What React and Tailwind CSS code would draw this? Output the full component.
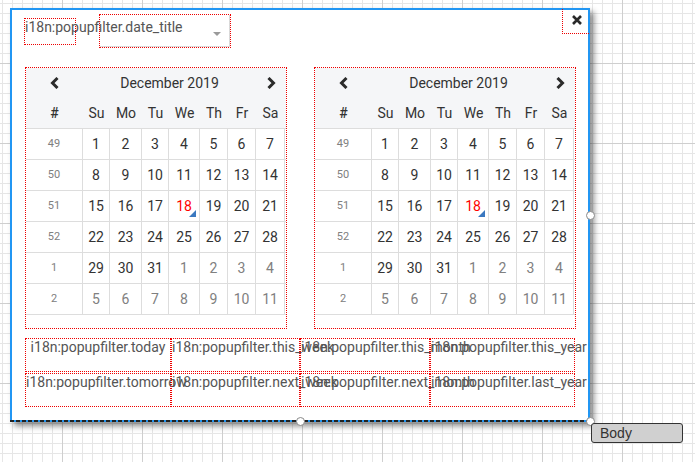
import React from "react";

const WEEKS = [
  { n: 49, d: [1, 2, 3, 4, 5, 6, 7].map((v) => [v, true]) },
  { n: 50, d: [8, 9, 10, 11, 12, 13, 14].map((v) => [v, true]) },
  { n: 51, d: [15, 16, 17, 18, 19, 20, 21].map((v) => [v, true]) },
  { n: 52, d: [22, 23, 24, 25, 26, 27, 28].map((v) => [v, true]) },
  { n: 1, d: [[29, true], [30, true], [31, true], [1, false], [2, false], [3, false], [4, false]] },
  { n: 2, d: [5, 6, 7, 8, 9, 10, 11].map((v) => [v, false]) },
];

const DAYS = ["Su", "Mo", "Tu", "We", "Th", "Fr", "Sa"];
const COLS = "grid grid-cols-[57px_27px_32px_27px_31px_28px_28px_29px]";

function Chevron({ dir }) {
  return (
    <svg width="10" height="12" viewBox="0 0 10 12">
      {dir === "left" ? (
        <polyline points="7.5,1 2.5,6 7.5,11" fill="none" stroke="#2b2b2b" strokeWidth="3" />
      ) : (
        <polyline points="2.5,1 7.5,6 2.5,11" fill="none" stroke="#2b2b2b" strokeWidth="3" />
      )}
    </svg>
  );
}

function Calendar() {
  return (
    <div className="w-[262px] h-[262px] border border-dotted border-[#ee0000]">
      <div className="bg-[#f5f6f8] border-b border-[#dddddd]">
        <div className={COLS + " h-[30px] items-center"}>
          <div className="flex justify-center">
            <Chevron dir="left" />
          </div>
          <div className="col-span-6 text-center text-[14px] text-[#333]">December 2019</div>
          <div className="flex justify-center">
            <Chevron dir="right" />
          </div>
        </div>
        <div className={COLS + " h-[30px] items-center text-[14px] text-[#333]"}>
          <div className="text-center font-medium">#</div>
          {DAYS.map((d) => (
            <div key={d} className="text-center">
              {d}
            </div>
          ))}
        </div>
      </div>
      {WEEKS.map((w) => (
        <div key={w.n} className={COLS + " h-[31px] border-b border-[#dddddd]"}>
          <div className="flex items-center justify-center border-r border-[#dddddd] text-[11px] text-[#808080]">
            {w.n}
          </div>
          {w.d.map(([v, cur], i) => {
            const today = cur === true && v === 18;
            return (
              <div
                key={i}
                className={
                  "relative flex items-center justify-center border-r border-[#dddddd] text-[14px] " +
                  (today ? "text-[#ff0000]" : cur ? "text-[#333]" : "text-[#808080]")
                }
              >
                {v}
                {today ? (
                  <span className="absolute right-[3px] bottom-[4px] w-0 h-0 border-l-[7px] border-l-transparent border-b-[7px] border-b-[#3a78c0]" />
                ) : null}
              </div>
            );
          })}
        </div>
      ))}
    </div>
  );
}

const BTN_ROWS = [
  ["today", "this_week", "this_month", "this_year"],
  ["tomorrow", "next_week", "next_month", "last_year"],
];

function Handle({ className }) {
  return (
    <span
      className={
        "absolute w-[9px] h-[9px] rounded-full bg-white border border-[#8a8a8a] " + className
      }
    />
  );
}

export default function App() {
  return (
    <div className="relative w-[695px] h-[462px] overflow-hidden pt-[8px] pl-[10px] font-[family-name:Roboto,'Liberation_Sans',sans-serif] bg-white bg-[linear-gradient(to_right,#cfcfcf_1px,transparent_1px),linear-gradient(to_bottom,#cfcfcf_1px,transparent_1px),linear-gradient(to_right,#e6e6e6_1px,transparent_1px),linear-gradient(to_bottom,#e6e6e6_1px,transparent_1px)] bg-size-[80px_80px,80px_80px,10px_10px,10px_10px] bg-position-[62px_0,0_63px,2px_0,0_3px]">
      <div className="relative w-[580px] h-[414px] bg-white border-2 border-[#2196f3] shadow-[4px_4px_6px_rgba(0,0,0,0.45)]">
        {/* title row */}
        <div className="flex items-start pl-[12px] pt-[4px]">
          <div className="mt-[4px] w-[52px] h-[27px] border border-dotted border-[#ee0000] whitespace-nowrap text-[14px] leading-[17px] text-[#555]">
            i18n:popupfilter.date_title
          </div>
          <div className="ml-[23px] w-[132px] h-[34px] border border-dotted border-[#ee0000]">
            <div className="relative h-full border-b border-r border-[#d9d9d9]">
              <span className="absolute left-[113px] top-[17px] w-0 h-0 border-l-[4px] border-r-[4px] border-t-[4px] border-l-transparent border-r-transparent border-t-[#9a9a9a]" />
            </div>
          </div>
        </div>

        {/* close button */}
        <div className="absolute right-[-1px] top-[-1px] w-[27px] h-[25px] border border-dotted border-[#ee0000] border-t-0 border-r-0">
          <svg className="absolute left-[9px] top-[6px]" width="10" height="10" viewBox="0 0 10 10">
            <path d="M1 1 L9 9 M9 1 L1 9" stroke="#2a2a2a" strokeWidth="2.6" />
          </svg>
        </div>

        {/* calendars */}
        <div className="flex gap-[27px] ml-[13px] mt-[19px]">
          <Calendar />
          <Calendar />
        </div>

        {/* quick buttons */}
        <div className="grid grid-cols-[146px_129px_130px_145px] gap-y-[1px] ml-[13px] mt-[9px]">
          {BTN_ROWS.map((row) =>
            row.map((k) => (
              <div
                key={k}
                className="h-[34px] border border-dotted border-[#ee0000] text-center whitespace-nowrap text-[14px] leading-[17px] text-[#555]"
              >
                i18n:popupfilter.{k}
              </div>
            ))
          )}
        </div>

        {/* selection dashes on the bottom edge */}
        <div className="absolute left-[-2px] right-[-2px] bottom-[-2px] h-[2px] bg-[repeating-linear-gradient(to_right,#222_0_4px,transparent_4px_6px)]" />

        <Handle className="right-[-7px] top-[201px]" />
        <Handle className="left-[284px] bottom-[-6px]" />
        <Handle className="right-[-7px] bottom-[-6px]" />
      </div>

      <div className="absolute left-[591px] top-[423px] w-[92px] h-[20px] rounded-[3px] border border-[#333] bg-[#d0d0d0] pl-[8px] text-[14px] leading-[18px] text-[#333] font-[family-name:'Liberation_Sans',Arial,sans-serif]">
        Body
      </div>
    </div>
  );
}
